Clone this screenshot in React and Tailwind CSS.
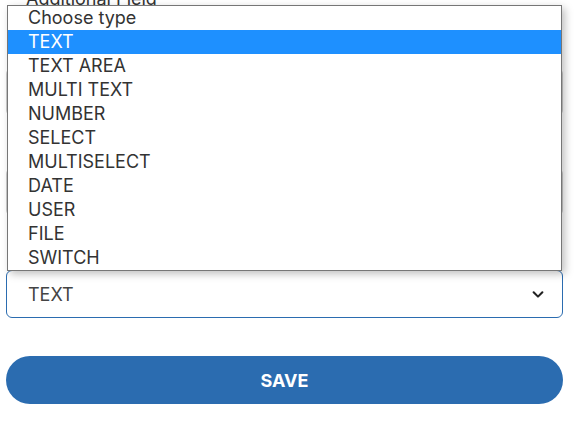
import React from 'react';

const types = ['TEXT', 'TEXT AREA', 'MULTI TEXT', 'NUMBER', 'SELECT', 'MULTISELECT', 'DATE', 'USER', 'FILE', 'SWITCH'];

export default function App() {
  return (
    <div className="relative w-[581px] h-[421px] overflow-hidden bg-white font-['Inter',sans-serif]">
      <div className="pl-[6px] pr-[18px] -mt-[12px] flex flex-col">
        <label className="pl-[20px] text-[18px] leading-[22px] text-[#333]">Additional Field</label>
        <div className="mt-[58px] h-[48px] rounded-[6px] border border-[#ccc]" />
        <div className="mt-[52px] h-[48px] rounded-[6px] border border-[#ccc]" />
        <div className="mt-[54px] h-[48px] rounded-[6px] border border-[#2b6cb0] flex items-center justify-between pl-[21px] pr-[17px]">
          <span className="text-[18px] text-[#444]">TEXT</span>
          <svg width="14" height="14" viewBox="0 0 16 16" fill="none" stroke="#222" strokeWidth="2.4" strokeLinecap="round" strokeLinejoin="round">
            <path d="M3 6l5 5 5-5" />
          </svg>
        </div>
        <button className="mt-[38px] h-[48px] rounded-full bg-[#2b6cb0] text-white font-bold text-[18px]">SAVE</button>
      </div>

      <ul className="absolute left-[7px] top-[5px] w-[555px] bg-white border border-[#767676] shadow-[3px_3px_8px_rgba(0,0,0,0.25)]">
        <li className="h-[24px] leading-[24px] pl-[20px] text-[18px] text-[#333]">Choose type</li>
        {types.map((t, i) => (
          <li
            key={t}
            className={`h-[24px] leading-[24px] pl-[20px] text-[18px] ${i === 0 ? 'bg-[#1e90ff] text-white' : 'text-[#333]'}`}
          >
            {t}
          </li>
        ))}
      </ul>
    </div>
  );
}
